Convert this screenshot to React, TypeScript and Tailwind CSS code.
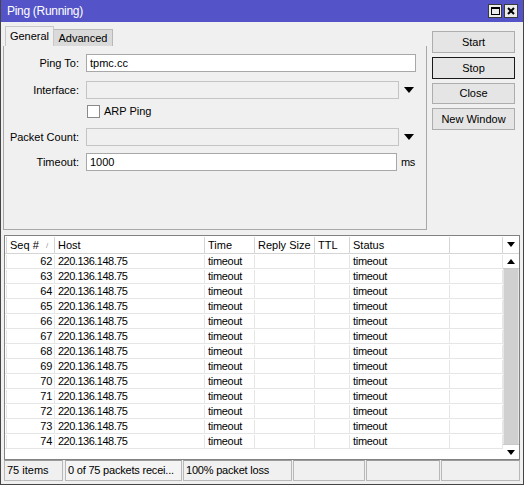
const seqs = Array.from({ length: 13 }, (_, i) => 62 + i);

function DownArrow() {
  return (
    <svg width="10" height="6" viewBox="0 0 10 6">
      <path d="M0 0 L10 0 L5 6 Z" fill="#000" />
    </svg>
  );
}

function SmallArrow({ up }: { up?: boolean }) {
  return (
    <svg width="8" height="5" viewBox="0 0 8 5">
      <path d={up ? "M0 5 L8 5 L4 0 Z" : "M0 0 L8 0 L4 5 Z"} fill="#000" />
    </svg>
  );
}

function Field({
  label,
  value,
  disabled,
  width,
  arrow,
  suffix,
  className = "",
}: {
  label: string;
  value?: string;
  disabled?: boolean;
  width: string;
  arrow?: boolean;
  suffix?: string;
  className?: string;
}) {
  return (
    <div className={`flex items-center h-[18px] ${className}`}>
      <div className="w-[76px] text-right pr-[1px]">{label}</div>
      <div
        className={`ml-[6px] h-[18px] ${width} border ${
          disabled ? "bg-[#f0f0f0] border-[#c4c4c4]" : "bg-white border-[#a8a8a8]"
        } flex items-center px-[3px]`}
      >
        {value}
      </div>
      {arrow && (
        <div className="ml-[5px] flex items-center">
          <DownArrow />
        </div>
      )}
      {suffix && <div className="ml-[4px] tracking-[-0.4px]">{suffix}</div>}
    </div>
  );
}

export default function App() {
  return (
    <div className="w-[524px] h-[485px] bg-[#f0f0f0] border-x border-b border-[#454545] flex flex-col text-[11px] text-black font-[Liberation_Sans,Arial,sans-serif] leading-none overflow-hidden">
      {/* title bar */}
      <div className="h-[22px] bg-[#5454c8] flex items-center pl-[6px] pr-[5px] text-white text-[12px] tracking-[-0.3px]">
        <span>Ping (Running)</span>
        <div className="ml-auto flex gap-[2px]">
          <div className="w-[14px] h-[14px] bg-[#ececec] border border-[#3a3a3a] flex items-center justify-center">
            <div className="w-[9px] h-[8px] border border-black border-t-2" />
          </div>
          <div className="w-[14px] h-[14px] bg-[#ececec] border border-[#3a3a3a] flex items-center justify-center">
            <svg width="8" height="8" viewBox="0 0 8 8">
              <path d="M1 1 L7 7 M7 1 L1 7" stroke="#000" strokeWidth="2" />
            </svg>
          </div>
        </div>
      </div>

      {/* top: tabs + buttons */}
      <div className="flex h-[208px]">
        <div className="ml-[2px] w-[424px] flex flex-col">
          <div className="flex items-end h-[24px]">
            <div className="ml-[2px] w-[49px] h-[20px] border-t border-x border-[#c8c8c8] bg-[#f0f0f0] flex items-center justify-center">
              General
            </div>
            <div className="w-[59px] h-[17px] border-t border-r border-[#b8b8b8] bg-[#dadada] flex items-center justify-center">
              Advanced
            </div>
          </div>
          <div className="flex-1 border-l border-r border-b border-[#a8a8a8] flex flex-col pt-[8px]">
            <Field label="Ping To:" value="tpmc.cc" width="w-[330px]" />
            <Field
              label="Interface:"
              disabled
              width="w-[313px]"
              arrow
              className="mt-[9px]"
            />
            <div className="flex items-center h-[13px] mt-[6px]">
              <div className="ml-[83px] w-[13px] h-[13px] bg-white border border-[#8a8a8a]" />
              <span className="ml-[4px]">ARP Ping</span>
            </div>
            <Field
              label="Packet Count:"
              disabled
              width="w-[313px]"
              arrow
              className="mt-[10px]"
            />
            <Field
              label="Timeout:"
              value="1000"
              width="w-[311px]"
              suffix="ms"
              className="mt-[7px]"
            />
          </div>
        </div>
        <div className="ml-[5px] mt-[9px] w-[83px] flex flex-col gap-[4px]">
          <button className="h-[22px] bg-[#e5e5e5] border border-[#adadad]">Start</button>
          <button className="h-[22px] bg-[#e5e5e5] border border-[#1a1a1a]">Stop</button>
          <button className="h-[21px] bg-[#e5e5e5] border border-[#adadad]">Close</button>
          <button className="h-[22px] bg-[#e5e5e5] border border-[#adadad]">New Window</button>
        </div>
      </div>

      {/* table */}
      <div className="mt-[5px] ml-[3px] w-[516px] h-[225px] border border-[#828282] bg-white flex">
        <div className="w-[498px] flex flex-col">
          <div className="grid grid-cols-[2px_48px_150px_50px_60px_35px_100px_53px] h-[18px] border-b border-[#d5d5d5] pt-[1px]">
            <div className="border-r border-[#d5d5d5]" />
            <div className="border-r border-[#d5d5d5] flex items-center pl-[3px] relative">
              Seq #
              <span className="absolute left-[39px] top-[5px] text-[8px] text-[#9a9a9a]">/</span>
            </div>
            <div className="border-r border-[#d5d5d5] flex items-center pl-[3px]">Host</div>
            <div className="border-r border-[#d5d5d5] flex items-center pl-[3px]">Time</div>
            <div className="border-r border-[#d5d5d5] flex items-center pl-[3px]">Reply Size</div>
            <div className="border-r border-[#d5d5d5] flex items-center pl-[3px]">TTL</div>
            <div className="border-r border-[#d5d5d5] flex items-center pl-[3px]">Status</div>
            <div className="border-r border-[#d5d5d5]" />
          </div>
          {seqs.map((n) => (
            <div
              key={n}
              className="grid grid-cols-[2px_48px_150px_50px_60px_35px_100px_53px] h-[15px] border-b border-[#e6e6e6] pt-[1px]"
            >
              <div className="border-r border-[#e6e6e6]" />
              <div className="border-r border-[#e6e6e6] flex items-center justify-end pr-[2px] tracking-[-0.3px]">
                {n}
              </div>
              <div className="border-r border-[#e6e6e6] flex items-center pl-[3px] tracking-[-0.5px]">
                220.136.148.75
              </div>
              <div className="border-r border-[#e6e6e6] flex items-center pl-[3px] tracking-[-0.3px]">
                timeout
              </div>
              <div className="border-r border-[#e6e6e6]" />
              <div className="border-r border-[#e6e6e6]" />
              <div className="border-r border-[#e6e6e6] flex items-center pl-[3px] tracking-[-0.3px]">
                timeout
              </div>
              <div className="border-r border-[#e6e6e6]" />
            </div>
          ))}
        </div>
        <div className="w-[16px] flex flex-col">
          <div className="h-[18px] border-b border-[#d5d5d5] flex items-center justify-center">
            <SmallArrow />
          </div>
          <div className="h-[15px] border-b border-[#c8c8c8] flex items-center justify-center">
            <SmallArrow up />
          </div>
          <div className="flex-1 bg-[#d0d0d0] border-x border-[#e6e6e6]" />
          <div className="h-[15px] border-t border-[#c8c8c8] flex items-center justify-center">
            <SmallArrow />
          </div>
        </div>
      </div>

      {/* status bar */}
      <div className="ml-[3px] h-[21px] flex">
        <div className="w-[59px] border border-[#b8b8b8] border-t-[#9a9a9a] flex items-center pl-[2px]">75 items</div>
        <div className="ml-[2px] w-[117px] border border-[#b8b8b8] border-t-[#9a9a9a] bg-[#f4f4f4] flex items-center pl-[2px] tracking-[-0.2px]">
          0 of 75 packets recei...
        </div>
        <div className="ml-[1px] w-[109px] border border-[#b8b8b8] border-t-[#9a9a9a] flex items-center pl-[2px] tracking-[-0.2px]">
          100% packet loss
        </div>
        <div className="ml-[1px] w-[72px] border border-[#b8b8b8] border-t-[#9a9a9a]" />
        <div className="ml-[1px] w-[74px] border border-[#b8b8b8] border-t-[#9a9a9a]" />
        <div className="ml-[1px] w-[79px] border border-[#b8b8b8] border-t-[#9a9a9a]" />
      </div>
    </div>
  );
}
